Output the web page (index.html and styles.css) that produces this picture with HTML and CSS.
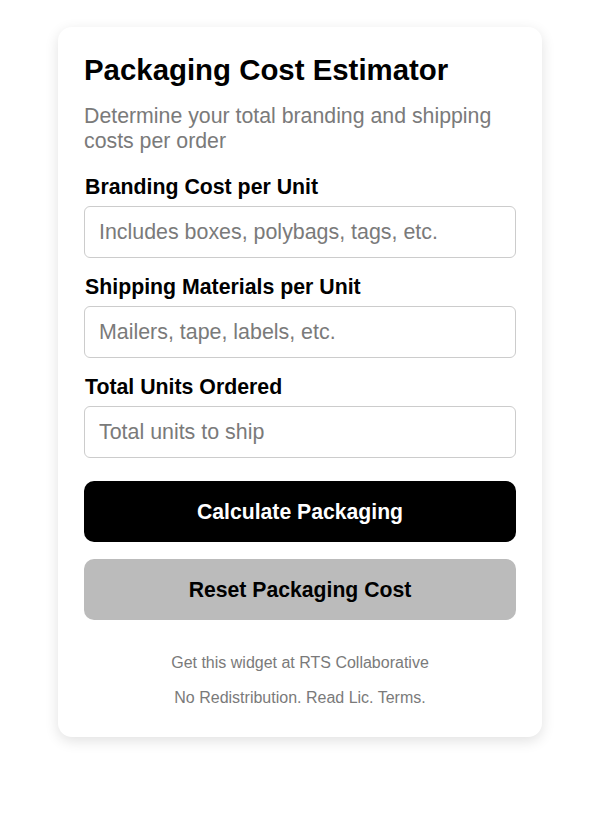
FILE: index.html
```html
<!DOCTYPE html>
<html lang="en">
<head>
<meta charset="utf-8">
<title>Packaging Cost Estimator</title>
<link rel="stylesheet" href="styles.css">
</head>
<body>
<div class="card">
  <h1 class="title">Packaging Cost Estimator</h1>
  <p class="subtitle">Determine your total branding and shipping costs per order</p>
  <div class="field">
    <label class="label" for="brand">Branding Cost per Unit</label>
    <input class="input" id="brand" type="text" placeholder="Includes boxes, polybags, tags, etc.">
  </div>
  <div class="field">
    <label class="label" for="ship">Shipping Materials per Unit</label>
    <input class="input" id="ship" type="text" placeholder="Mailers, tape, labels, etc.">
  </div>
  <div class="field">
    <label class="label" for="units">Total Units Ordered</label>
    <input class="input" id="units" type="text" placeholder="Total units to ship">
  </div>
  <div class="actions">
    <button class="btn btn-primary">Calculate Packaging</button>
    <button class="btn btn-secondary">Reset Packaging Cost</button>
  </div>
  <div class="footer">
    <p class="note">Get this widget at RTS Collaborative</p>
    <p class="note">No Redistribution. Read Lic. Terms.</p>
  </div>
</div>
</body>
</html>
```
FILE: styles.css
```css
html, body {
  margin: 0;
  padding: 0;
  background: #ffffff;
}
body {
  font-family: "Liberation Sans", Arial, sans-serif;
  padding: 27px 0 40px 58px;
}
.card {
  width: 484px;
  box-sizing: border-box;
  padding: 27px 26px 30px;
  background: #fff;
  border-radius: 14px;
  box-shadow: 0 4px 14px rgba(0, 0, 0, 0.12);
}
.title {
  margin: 0;
  font-size: 29.4px;
  line-height: 32px;
  font-weight: bold;
  color: #000;
}
.subtitle {
  margin: 18px 0 0;
  font-size: 21.3px;
  line-height: 25px;
  color: #7a7a7a;
}
.field {
  display: flex;
  flex-direction: column;
}
.field:first-of-type { margin-top: 22px; }
.field + .field { margin-top: 18px; }
.label {
  font-size: 21.3px;
  line-height: 22px;
  font-weight: bold;
  color: #000;
  padding-left: 1px;
}
.input {
  margin-top: 8px;
  height: 52px;
  box-sizing: border-box;
  border: 1px solid #cccccc;
  border-radius: 6px;
  padding: 0 14px;
  font-family: "Liberation Sans", Arial, sans-serif;
  font-size: 21.4px;
  color: #000;
  outline: none;
}
.input::placeholder { color: #7a7a7a; }
.actions {
  margin-top: 23px;
  display: flex;
  flex-direction: column;
  gap: 17px;
}
.btn {
  height: 61px;
  border: none;
  border-radius: 10px;
  font-family: "Liberation Sans", Arial, sans-serif;
  font-size: 21.2px;
  font-weight: bold;
  cursor: pointer;
}
.btn-primary { background: #000; color: #fff; }
.btn-secondary { background: #bbbbbb; color: #000; }
.footer {
  margin-top: 34px;
  display: flex;
  flex-direction: column;
  gap: 17px;
  text-align: center;
}
.note {
  margin: 0;
  font-size: 16px;
  line-height: 18px;
  color: #7a7a7a;
}
```
